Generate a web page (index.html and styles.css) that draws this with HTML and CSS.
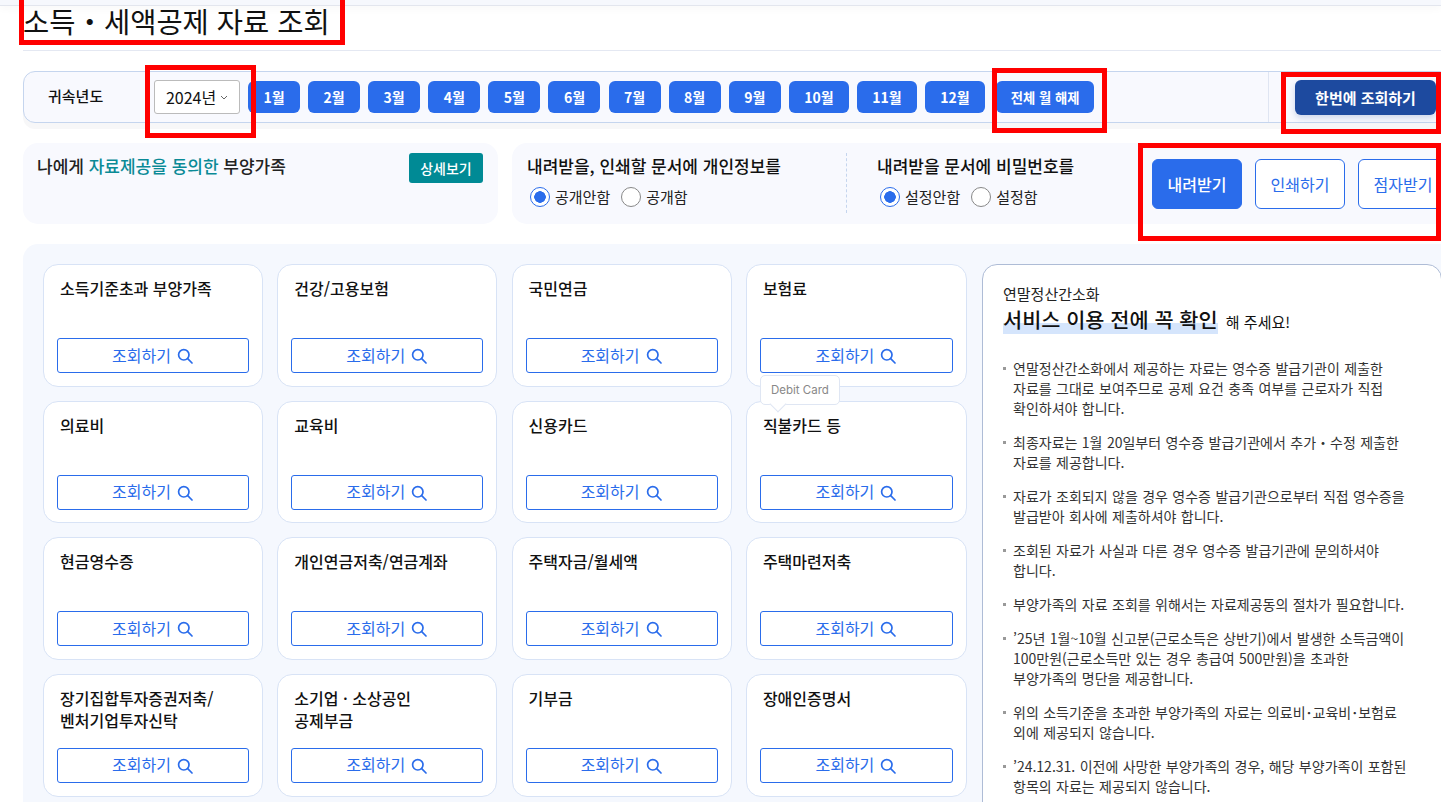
FILE: index.html
```html
<!DOCTYPE html>
<html lang="ko">
<head>
<meta charset="utf-8">
<title>소득·세액공제 자료 조회</title>
<link rel="stylesheet" href="styles.css">
</head>
<body>
<svg class="sprite" width="0" height="0" aria-hidden="true"><defs><symbol id="search" viewBox="0 0 16 16"><circle cx="6.8" cy="6.8" r="5.2" fill="none" stroke="currentColor" stroke-width="1.7"/><path d="M10.7 10.7 15 15" fill="none" stroke="currentColor" stroke-width="1.7" stroke-linecap="round"/></symbol></defs></svg>
<div class="topstrip"></div>
<div class="page">
  <h1 class="title">소득・세액공제 자료 조회</h1>
  <div class="yearbar">
    <span class="yearlabel">귀속년도</span>
    <div class="select">2024년<svg class="chev" viewBox="0 0 8 5"><path d="M1 1l3 3 3-3" fill="none" stroke="#666" stroke-width="1"/></svg></div>
    <div class="months">
      <button class="month">1월</button><button class="month">2월</button><button class="month">3월</button><button class="month">4월</button><button class="month">5월</button><button class="month">6월</button><button class="month">7월</button><button class="month">8월</button><button class="month">9월</button><button class="month wide">10월</button><button class="month wide">11월</button><button class="month wide">12월</button><button class="month clear">전체 월 해제</button>
    </div>
    <div class="allwrap"><button class="allbtn">한번에 조회하기</button></div>
  </div>
  <div class="options">
    <div class="consent">
      <p class="consent-text">나에게 <em>자료제공을 동의한</em> 부양가족</p>
      <button class="detail">상세보기</button>
    </div>
    <div class="docopts">
      <div class="optgroup first">
        <p class="opttitle">내려받을, 인쇄할 문서에 개인정보를</p>
        <div class="radios"><span class="radio on"></span><span class="rlabel">공개안함</span><span class="radio"></span><span class="rlabel">공개함</span></div>
      </div>
      <div class="optgroup second">
        <p class="opttitle">내려받을 문서에 비밀번호를</p>
        <div class="radios"><span class="radio on"></span><span class="rlabel">설정안함</span><span class="radio"></span><span class="rlabel">설정함</span></div>
      </div>
      <div class="actions">
        <button class="act primary">내려받기</button><button class="act">인쇄하기</button><button class="act">점자받기</button>
      </div>
    </div>
  </div>
  <div class="main">
    <div class="cards">
      <div class="card"><h3>소득기준초과 부양가족</h3><button class="q"><span>조회하기</span><svg><use href="#search"/></svg></button></div>
      <div class="card"><h3>건강/고용보험</h3><button class="q"><span>조회하기</span><svg><use href="#search"/></svg></button></div>
      <div class="card"><h3>국민연금</h3><button class="q"><span>조회하기</span><svg><use href="#search"/></svg></button></div>
      <div class="card"><h3>보험료</h3><button class="q"><span>조회하기</span><svg><use href="#search"/></svg></button></div>
      <div class="card"><h3>의료비</h3><button class="q"><span>조회하기</span><svg><use href="#search"/></svg></button></div>
      <div class="card"><h3>교육비</h3><button class="q"><span>조회하기</span><svg><use href="#search"/></svg></button></div>
      <div class="card"><h3>신용카드</h3><button class="q"><span>조회하기</span><svg><use href="#search"/></svg></button></div>
      <div class="card"><span class="tip">Debit Card</span><h3>직불카드 등</h3><button class="q"><span>조회하기</span><svg><use href="#search"/></svg></button></div>
      <div class="card"><h3>현금영수증</h3><button class="q"><span>조회하기</span><svg><use href="#search"/></svg></button></div>
      <div class="card"><h3>개인연금저축/연금계좌</h3><button class="q"><span>조회하기</span><svg><use href="#search"/></svg></button></div>
      <div class="card"><h3>주택자금/월세액</h3><button class="q"><span>조회하기</span><svg><use href="#search"/></svg></button></div>
      <div class="card"><h3>주택마련저축</h3><button class="q"><span>조회하기</span><svg><use href="#search"/></svg></button></div>
      <div class="card"><h3>장기집합투자증권저축/<br>벤처기업투자신탁</h3><button class="q"><span>조회하기</span><svg><use href="#search"/></svg></button></div>
      <div class="card"><h3>소기업 · 소상공인<br>공제부금</h3><button class="q"><span>조회하기</span><svg><use href="#search"/></svg></button></div>
      <div class="card"><h3>기부금</h3><button class="q"><span>조회하기</span><svg><use href="#search"/></svg></button></div>
      <div class="card"><h3>장애인증명서</h3><button class="q"><span>조회하기</span><svg><use href="#search"/></svg></button></div>
    </div>
    <aside class="notice">
      <p class="n-sub">연말정산간소화</p>
      <p class="n-head"><strong>서비스 이용 전에 꼭 확인</strong> <span>해 주세요!</span></p>
      <ul class="n-list">
        <li>연말정산간소화에서 제공하는 자료는 영수증 발급기관이 제출한<br>자료를 그대로 보여주므로 공제 요건 충족 여부를 근로자가 직접<br>확인하셔야 합니다.</li>
        <li>최종자료는 1월 20일부터 영수증 발급기관에서 추가・수정 제출한<br>자료를 제공합니다.</li>
        <li>자료가 조회되지 않을 경우 영수증 발급기관으로부터 직접 영수증을<br>발급받아 회사에 제출하셔야 합니다.</li>
        <li>조회된 자료가 사실과 다른 경우 영수증 발급기관에 문의하셔야<br>합니다.</li>
        <li>부양가족의 자료 조회를 위해서는 자료제공동의 절차가 필요합니다.</li>
        <li>’25년 1월~10월 신고분(근로소득은 상반기)에서 발생한 소득금액이<br>100만원(근로소득만 있는 경우 총급여 500만원)을 초과한<br>부양가족의 명단을 제공합니다.</li>
        <li>위의 소득기준을 초과한 부양가족의 자료는 의료비･교육비･보험료<br>외에 제공되지 않습니다.</li>
        <li>’24.12.31. 이전에 사망한 부양가족의 경우, 해당 부양가족이 포함된<br>항목의 자료는 제공되지 않습니다.</li>
      </ul>
    </aside>
  </div>
</div>
<div class="mark m-title"></div>
<div class="mark m-year"></div>
<div class="mark m-clear"></div>
<div class="mark m-all"></div>
<div class="mark m-act"></div>
</body>
</html>
```
FILE: styles.css
```css
* { box-sizing: border-box; }
html, body { margin: 0; height: 802px; width: 1441px; overflow: hidden; background: #fff; }
body { position: relative; font-family: "Noto Sans CJK KR", "Noto Sans", sans-serif; color: #111; }
p, h1, h3, ul { margin: 0; padding: 0; }
button { font-family: inherit; cursor: pointer; padding: 0; }
.sprite { position: absolute; }
.topstrip { height: 6px; background: #f6f8fd; border-bottom: 1px solid #e3e6ee; box-shadow: 0 2px 8px rgba(0,0,0,.04); }
.page { width: 1500px; padding-left: 23px; }
.title { height: 45px; font-size: 28.5px; font-weight: 400; line-height: 30px; border-bottom: 1px solid #e4e8f2; color: #111; }
.yearbar { display: flex; align-items: center; height: 52px; margin-top: 20px; background: #f8f9fe; border: 1px solid #c5d5ee; border-radius: 12px 0 0 12px; width: 1418px; box-shadow: 0 6px 0 #f7f7f8; }
.yearlabel { width: 130px; padding-left: 24px; font-size: 15px; font-weight: 500; line-height: 20px; margin-top: -3px; }
.select { display: flex; align-items: center; justify-content: center; gap: 4px; width: 86px; height: 34px; background: #fff; border: 1px solid #bbb; border-radius: 3px; font-size: 16px; }
.chev { width: 8px; height: 5px; }
.months { display: flex; gap: 8.1px; margin-left: 8px; }
.month { width: 52px; height: 32px; background: #2a6ceb; color: #fff; border: 0; border-radius: 6px; font-size: 14px; font-weight: 700; }
.month.wide { width: 60px; }
.month.clear { width: 98px; margin-left: 3px; font-size: 13.3px; }
.allwrap { margin-left: auto; width: 172px; height: 100%; border-left: 1px solid #dfe5f2; padding-left: 26px; display: flex; align-items: center; }
.allbtn { width: 141px; height: 35px; background: #1d4a9f; color: #fff; border: 0; border-radius: 6px; font-size: 15px; font-weight: 700; box-shadow: 0 3px 6px rgba(29,74,159,.2); }
.options { display: flex; gap: 14px; margin-top: 20px; height: 81px; }
.consent { width: 475px; flex: none; background: #f8f9fe; border-radius: 15px; padding: 10px 15px 10px 14px; display: flex; justify-content: space-between; align-items: flex-start; }
.consent-text { font-size: 17px; font-weight: 500; line-height: 26px; color: #222; }
.consent-text em { font-style: normal; color: #0a8a96; }
.detail { width: 74px; height: 30px; background: #008a95; color: #fff; border: 0; border-radius: 3px; font-size: 14px; font-weight: 500; }
.docopts { width: 960px; flex: none; background: #f8f9fe; border-radius: 15px 0 0 15px; display: flex; align-items: flex-start; }
.optgroup { padding-top: 10px; flex: none; }
.optgroup.first { width: 334px; padding-left: 15px; }
.optgroup.second { width: 292px; padding-left: 31px; position: relative; }
.optgroup.second::before { content: ""; position: absolute; left: 0; top: 10px; height: 60px; border-left: 1px dashed #c5d5ee; }
.opttitle { font-size: 17px; font-weight: 500; line-height: 26px; }
.radios { display: flex; align-items: center; font-size: 15px; margin-top: 7px; padding-left: 3px; }
.radio { width: 20px; height: 20px; border-radius: 50%; border: 1px solid #888; background: #fff; margin-right: 5px; flex: none; }
.radio.on { border-color: #2a6ceb; background: radial-gradient(circle, #2a6ceb 0 5.5px, #fff 6px); }
.rlabel { margin-right: 11px; color: #222; }
.actions { display: flex; flex: none; gap: 13px; padding: 16px 0 0 14px; }
.act { width: 90px; height: 50px; background: #fff; color: #2a6ceb; border: 1px solid #2a6ceb; border-radius: 6px; font-size: 16px; font-weight: 400; }
.act.primary { background: #2a6ceb; color: #fff; font-weight: 500; }
.main { display: flex; gap: 15px; margin-top: 20px; width: 1418px; height: 560px; background: #f5f8fe; border-radius: 15px 0 0 0; padding: 20px 0 0 20px; }
.cards { display: grid; grid-template-columns: 220px 220px 220px 221px; grid-auto-rows: 122.6px; gap: 14.07px 14.3px; flex: none; width: 924px; }
.card { position: relative; display: flex; flex-direction: column; justify-content: space-between; background: #fff; border: 1px solid #d8e3f6; border-radius: 15px; padding: 12px 13px 12.6px; }
.card h3 { font-size: 16px; font-weight: 500; line-height: 22px; padding-left: 3px; color: #111; }
.q { display: flex; align-items: center; justify-content: center; gap: 6px; height: 35px; background: #fff; color: #2a6ceb; border: 1px solid #2a6ceb; border-radius: 3px; font-size: 16px; }
.q span { margin: -2px 0 0 -1px; }
.q svg { width: 16px; height: 16px; margin-top: 1px; }
.tip { position: absolute; left: 13px; top: -27px; width: 80px; height: 30px; background: #fff; border: 1px solid #dfe6f3; border-radius: 5px; color: #888; font: 11.5px/28px "Inter", sans-serif; text-align: center; z-index: 2; }
.tip::after { content: ""; position: absolute; left: 11px; bottom: -6px; width: 11px; height: 11px; background: #fff; border-right: 1px solid #dfe6f3; border-bottom: 1px solid #dfe6f3; transform: rotate(45deg); }
.notice { width: 460px; height: 560px; background: #fff; border: 1px solid #aebcd6; border-radius: 15px 15px 0 0; padding: 19px 20px; flex: none; }
.n-sub { font-size: 15px; line-height: 20px; color: #222; }
.n-head { font-size: 15px; line-height: 30px; }
.n-head strong { font-size: 20.8px; font-weight: 500; background: linear-gradient(transparent 62%, #d5e5fc 62%); margin-right: 4px; }
.n-list { list-style: none; margin-top: 21px; }
.n-list li { position: relative; padding-left: 10px; font-size: 14px; line-height: 20px; word-spacing: .5px; color: #333; margin-bottom: 14px; }
.n-list li::before { content: ""; position: absolute; left: 0; top: 9px; width: 3px; height: 3px; background: #999; }
.mark { position: absolute; border: 5px solid #f00; pointer-events: none; z-index: 5; }
.m-title { left: 19px; top: -5px; width: 326px; height: 50px; }
.m-year { left: 145px; top: 65px; width: 111px; height: 73px; }
.m-clear { left: 992px; top: 68px; width: 115px; height: 65px; }
.m-all { left: 1281px; top: 72px; width: 160px; height: 62px; }
.m-act { left: 1138px; top: 143px; width: 303px; height: 98px; }
```
